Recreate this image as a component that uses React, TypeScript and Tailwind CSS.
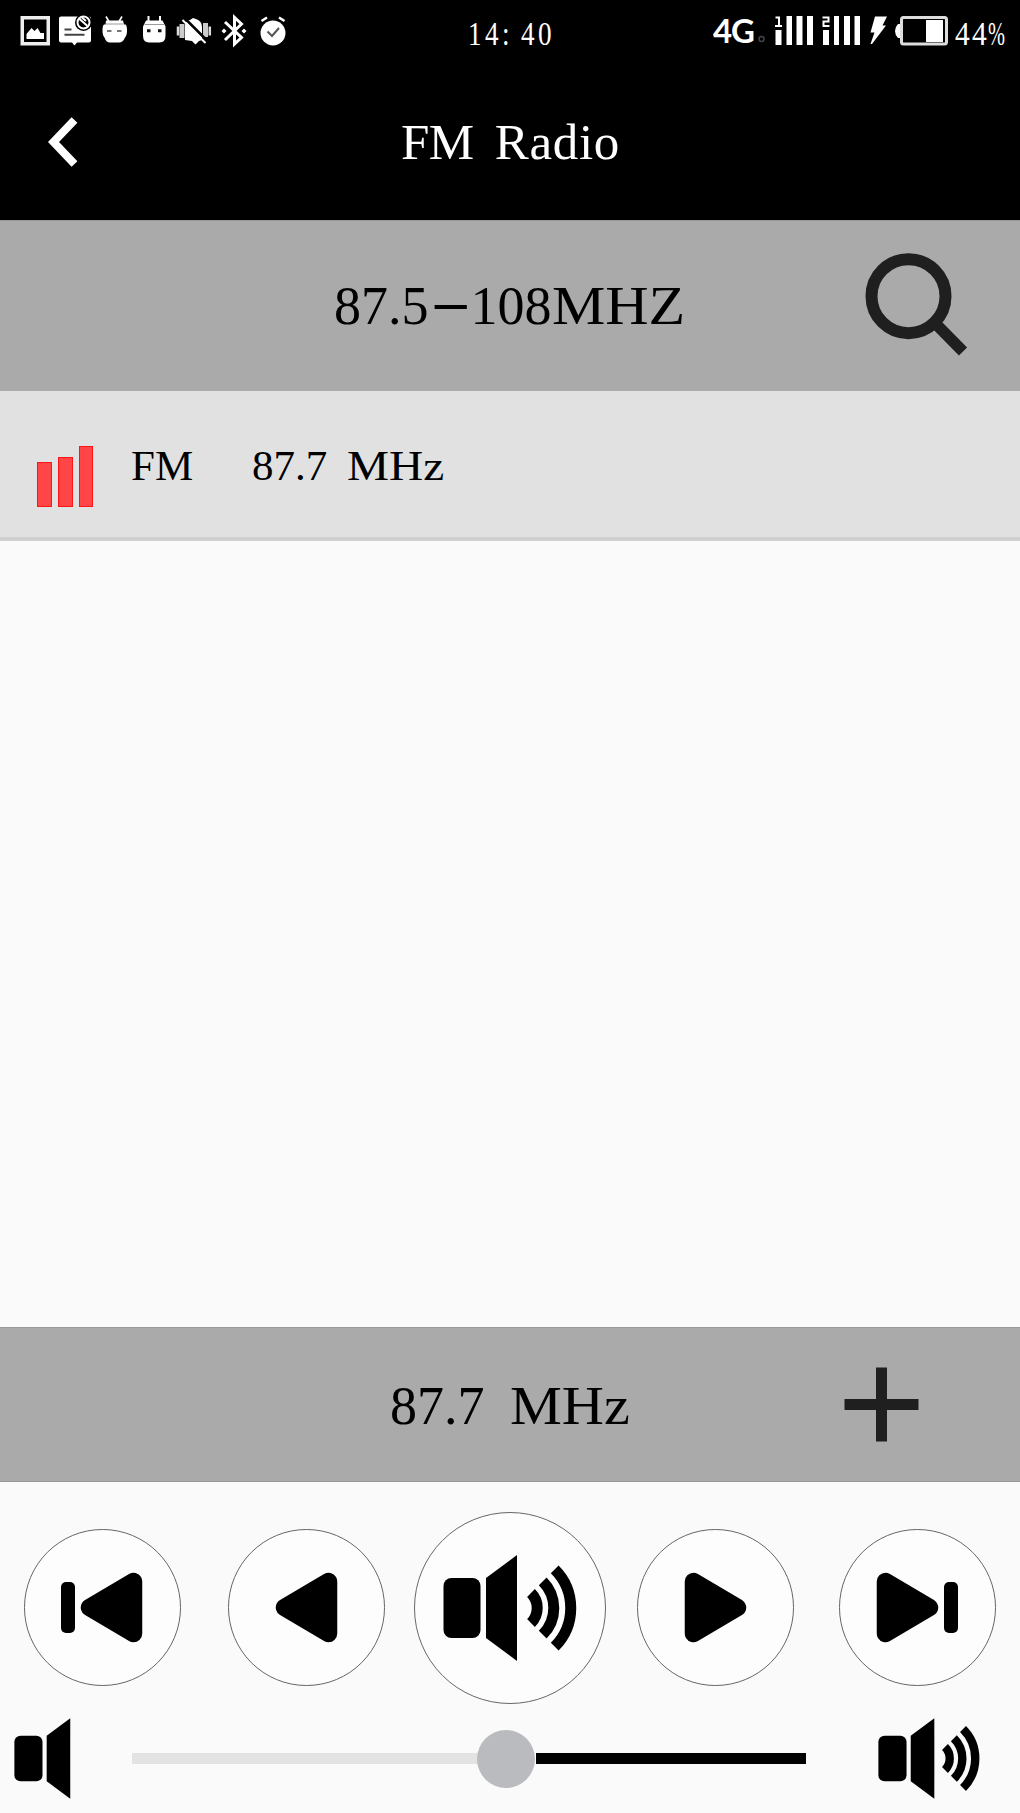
interface IconProps {
  className?: string;
}

interface SpeakerProps extends IconProps {
  waves?: boolean;
}

function StatusIcons() {
  return (
    <svg width="272" height="34" viewBox="18 14 272 34" fill="white">
      {/* picture */}
      <path fillRule="evenodd" d="M20.5 16h29.500v29.500h-29.500zM24 19.500v22.500h22.500v-22.500z" fill="#eee" />
      <path d="M26.500 39v-5l5-6 3 3 3-3 3 5h3.500v6z" />
      {/* message */}
      <path d="M61 16.500h28q2 0 2 2v22q0 2-2 2h-12l-2.500 3-2.500-3h-11q-2 0-2-2v-22q0-2 2-2z" />
      <path d="M64.500 29.500h7M64.500 34.800h20" stroke="#444" strokeWidth="2" />
      <circle cx="83.500" cy="22.500" r="8.500" fill="black" />
      <circle cx="83.500" cy="22.500" r="6" fill="none" stroke="white" strokeWidth="2" />
      <path d="M79.500 19l8 7M82 17.500l4 3.500" stroke="white" strokeWidth="2" />
      {/* robot heads */}
      <path d="M106 16.500l3 5M122 16.500l-3 5" stroke="white" strokeWidth="1.600" />
      <path d="M106 20.500h17l1 4h1.500q1.500 1 1.500 6t-2 7q-2 5-6 5h-9q-4 0-5.500-5-2-2-2-7t1.500-6h1.500z" />
      <path d="M106 24h17" stroke="#999" strokeWidth="1" />
      <path d="M107 31h4.500M117 31h4.500" stroke="#777" strokeWidth="1.800" />
      <path d="M148.500 16v6M160 16v6" stroke="white" strokeWidth="2" />
      <path d="M146 20.500h16.500l3 6v9q0 7-6 7h-10.500q-6 0-6-7v-9z" />
      <path d="M144.500 24.500h20" stroke="#999" strokeWidth="1" />
      <path d="M147 30.800h3.500M158 30.800h3.500" stroke="#111" strokeWidth="3" />
      {/* vibrate */}
      <path d="M185 40v-14q0-5 5-6l3-2 3 1q6 2 6 8v13l-3 1-3.500 3.500-3.500-3.500z" />
      <path d="M182 24v14M205.500 23v14" stroke="#ccc" strokeWidth="5" />
      <path d="M178 26.500v9M209.800 26.500v9" stroke="#ddd" strokeWidth="2.500" />
      <path d="M185 18.500l23 23" stroke="black" strokeWidth="2.500" />
      <path d="M182.500 20l23 23" stroke="white" strokeWidth="2" />
      {/* bluetooth */}
      <path d="M225 22l16.500 15.500-7 6.500v-26.500l7 6.500-16.500 16" fill="none" stroke="white" strokeWidth="3" />
      <path d="M224 28.500l2.500 2.500-2.500 2.500-2.500-2.500zM244 28.500l2.500 2.500-2.500 2.500-2.500-2.500z" />
      {/* alarm */}
      <circle cx="273" cy="33" r="12.500" />
      <path d="M261.500 21l5.500-3.500M279 17.500l5.500 3.500" stroke="white" strokeWidth="2.500" />
      <path d="M267.500 31.500l4.500 4.500 7-8" fill="none" stroke="#555" strokeWidth="2" />
    </svg>
  );
}

function SignalIcons() {
  return (
    <svg width="192" height="34" viewBox="757 14 192 34" fill="white">
      <circle cx="761.500" cy="39" r="2.500" fill="none" stroke="#444" strokeWidth="1.500" />
      <path d="M775.500 17.500h3.500v8M775 26h7" fill="none" stroke="white" strokeWidth="2" />
      <path d="M775.500 30h6v15h-6zM786.500 16h5.500v29h-5.500zM796.500 16h6v29h-6zM807 16h6v29h-6z" />
      <path d="M822.500 17.500h6v4h-5v4.500h6" fill="none" stroke="white" strokeWidth="2" />
      <path d="M823 30h6v15h-6zM834 16h5v29h-5zM844 16h6v29h-6zM854.500 16h5.500v29h-5.500z" />
      <path d="M875 16.500h12l-4.500 9h3.500l-14 18.500h-1.500l4-11.500h-4z" />
      <rect x="901.500" y="17.500" width="45" height="26.500" rx="2" fill="none" stroke="#ddd" strokeWidth="3" />
      <path d="M900 24h-2q-3 3-3 7t3 7h2zM926 20h17v22h-17z" />
    </svg>
  );
}

function SearchIcon({ className }: IconProps) {
  return (
    <svg className={className} width="104" height="106" viewBox="864 251 104 106" fill="none" stroke="#1f1f1f">
      <circle cx="908.500" cy="296.200" r="37" strokeWidth="12" />
      <path d="M934 322l29 29.500" strokeWidth="11.500" />
    </svg>
  );
}

function Triangle({ className }: IconProps) {
  return (
    <svg className={className} width="63" height="71" viewBox="0 0 63 71">
      <path d="M9.500 35.500L53.500 9.500v52z" stroke="black" strokeWidth="17.500" strokeLinejoin="round" />
    </svg>
  );
}

function Speaker({ className, waves }: SpeakerProps) {
  return (
    <svg className={className} viewBox={waves ? '0 0 134 106' : '0 0 75 106'}>
      <rect x="0.500" y="23" width="37" height="60" rx="8" />
      <path d="M43 23L74 0v106L43 83z" />
      {waves && (
        <g fill="none" stroke="black" strokeWidth="11">
          <path d="M88 38a21.200 21.200 0 0 1 0 30" />
          <path d="M99.700 26.300a37.700 37.700 0 0 1 0 53.400" />
          <path d="M111.700 14.300a54.700 54.700 0 0 1 0 77.400" />
        </g>
      )}
    </svg>
  );
}

const roundButton =
  'flex h-[157px] w-[157px] shrink-0 items-center rounded-full border border-[#666] bg-[#fdfdfd]';

export default function App() {
  return (
    <div className="flex h-[1813px] w-[1020px] flex-col overflow-hidden bg-[#fafafa] font-['Liberation_Serif',serif] text-black">
      <div className="flex h-[62px] shrink-0 items-center bg-black pl-[18px] text-white">
        <StatusIcons />
        <span className="ml-[178px] mt-[5px] w-[92px] origin-left scale-x-[0.8] whitespace-pre text-[34px] leading-none tracking-[4.3px] [word-spacing:-3px]">
          14: 40
        </span>
        <span className="ml-[153px] w-[44px] origin-left scale-x-[1.03] whitespace-nowrap font-['Lato',sans-serif] text-[32px] font-bold leading-none tracking-[-1px]">
          4G
        </span>
        <SignalIcons />
        <span className="ml-[6px] mt-[5px] flex text-[34px] leading-none">
          <span className="w-[33px] origin-left scale-x-[0.87] tracking-[2.5px]">44</span>
          <span className="origin-left scale-x-[0.6]">%</span>
        </span>
      </div>

      <header className="flex h-[158px] shrink-0 items-center bg-black pl-[48px] text-white">
        <svg className="mt-[2px]" width="30" height="50" viewBox="0 0 30 50" fill="none" stroke="white" strokeWidth="8">
          <path d="M26.500 3L5.500 25l21 22" />
        </svg>
        <h1 className="ml-[323px] mt-[3px] whitespace-nowrap text-[51px] leading-none">
          <span className="tracking-[-0.5px]">FM</span>
          <span className="ml-[21px] tracking-[0.7px]">Radio</span>
        </h1>
      </header>

      <div className="flex h-[171px] shrink-0 items-center border-t border-[#999] bg-[#aaa] pl-[334px]">
        <div className="flex w-[530px] whitespace-nowrap text-[54px] leading-none">
          <span>87.5</span>
          <span className="w-[42px] origin-left translate-x-[1px] translate-y-[-4px] scale-x-[2.3]">-</span>
          <span>108</span>
          <span className="origin-left scale-x-[1.11]">MHZ</span>
        </div>
        <SearchIcon className="mb-[4px]" />
      </div>

      <div className="flex h-[150px] shrink-0 items-center border-b-4 border-[#d0d0d0] bg-[#e1e1e1] pl-[37px] text-[43px] leading-none">
        <div className="mt-[25px] flex h-[61px] items-end gap-[6px]">
          <div className="h-[45px] w-[15px] border border-[#ff1515] bg-[#ff4545]" />
          <div className="h-[50px] w-[15px] border border-[#ff1515] bg-[#ff4545]" />
          <div className="h-[61px] w-[14px] border border-[#ff1515] bg-[#ff4545]" />
        </div>
        <span className="ml-[38px] mt-[2px] w-[121px]">FM</span>
        <span className="mt-[2px] w-[95px]">87.7</span>
        <span className="mt-[2px] origin-left scale-x-[1.1]">MHz</span>
      </div>

      <main className="flex-1" />

      <div className="flex h-[155px] shrink-0 items-center border-y border-[#999] bg-[#aaa] pl-[390px]">
        <div className="mt-[2px] flex w-[454px] text-[54px] leading-none">
          <span className="w-[120px]">87.7</span>
          <span className="origin-left scale-x-[1.08]">MHz</span>
        </div>
        <svg width="75" height="75" viewBox="0 0 75 75" stroke="#1f1f1f" strokeWidth="11">
          <path d="M0.500 37.500h74M37.500 0.500v74" />
        </svg>
      </div>

      <footer className="h-[331px] shrink-0">
        <div className="flex h-[193px] items-center pl-[23.5px] mt-[29px]">
          <button className={roundButton}>
            <div className="ml-[36.5px] h-[51px] w-[14px] rounded-[5px] bg-black" />
            <Triangle className="ml-[5px]" />
          </button>
          <button className={`${roundButton} ml-[47px]`}>
            <Triangle className="ml-[46px]" />
          </button>
          <button className="ml-[29px] flex h-[192px] w-[192px] shrink-0 items-center rounded-full border border-[#666] bg-[#fdfdfd]">
            <Speaker waves className="ml-[28.5px] h-[106px] w-[134px]" />
          </button>
          <button className={`${roundButton} ml-[31px]`}>
            <Triangle className="ml-[46px] rotate-180" />
          </button>
          <button className={`${roundButton} ml-[45px]`}>
            <Triangle className="ml-[36.5px] rotate-180" />
            <div className="ml-[4.5px] h-[51px] w-[14px] rounded-[5px] bg-black" />
          </button>
        </div>
        <div className="mt-[14px] flex h-[81px] items-center pl-[14px]">
          <Speaker className="h-[81px] w-[57px]" />
          <div className="ml-[61px] flex items-center">
            <div className="h-[11px] w-[346px] bg-[#e3e3e3]" />
            <div className="ml-[-1px] mr-px h-[58px] w-[58px] rounded-full bg-[#babbbf]" />
            <div className="h-[11px] w-[270px] bg-black" />
          </div>
          <Speaker waves className="ml-[72px] h-[81px] w-[102px]" />
        </div>
      </footer>
    </div>
  );
}
